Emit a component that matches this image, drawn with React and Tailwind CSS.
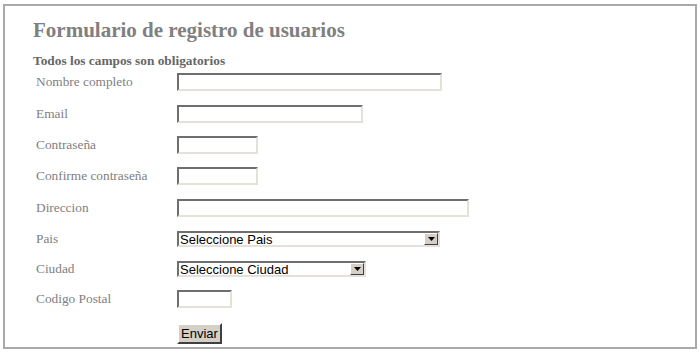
import React from 'react';

const serif = { fontFamily: '"Liberation Serif", "Times New Roman", serif' };
const sans = { fontFamily: '"Liberation Sans", Arial, sans-serif' };

const inset =
  'border-2 border-t-[#6e6e6e] border-l-[#6e6e6e] border-b-[#e4e1da] border-r-[#e4e1da] bg-white';

function Row({ label, children, className = '' }) {
  return (
    <div className={`flex items-center ${className}`}>
      <label className="w-[144px] pl-[3px] text-[13.33px] text-[#808080] leading-none" style={serif}>
        {label}
      </label>
      {children}
    </div>
  );
}

function TextInput({ width, type = 'text' }) {
  return <input type={type} className={`${inset} h-[18px] outline-none ${width}`} />;
}

function FakeSelect({ width, placeholder }) {
  return (
    <div className={`${inset} h-[16px] flex items-stretch ${width}`}>
      <select
        className="appearance-none flex-1 min-w-0 bg-white text-[13px] text-black leading-none pl-[1px] outline-none"
        style={sans}
        defaultValue=""
      >
        <option value="">{placeholder}</option>
      </select>
      <div className="w-[14px] bg-[#d4d0c8] border border-t-white border-l-white border-b-[#404040] border-r-[#404040] flex items-center justify-center">
        <svg width="7" height="4" viewBox="0 0 7 4">
          <path d="M0 0h7L3.5 4z" fill="#000" />
        </svg>
      </div>
    </div>
  );
}

export default function App() {
  return (
    <div className="bg-white w-[700px] h-[353px] pt-[4px] pl-[3px]">
      <div className="w-[694px] h-[345px] border-2 border-[#a9a9a9] pl-[28px]">
        <h1 className="mt-[12px] text-[21px] leading-[24px] font-bold text-[#808080]" style={serif}>
          Formulario de registro de usuarios
        </h1>
        <p className="mt-[11px] text-[13.33px] leading-[16px] font-bold text-[#666666]" style={serif}>
          Todos los campos son obligatorios
        </p>
        <form className="mt-[4px]" onSubmit={(e) => e.preventDefault()}>
          <Row label="Nombre completo">
            <TextInput width="w-[265px]" />
          </Row>
          <Row label="Email" className="mt-[14px]">
            <TextInput width="w-[186px]" type="email" />
          </Row>
          <Row label="Contraseña" className="mt-[13px]">
            <TextInput width="w-[81px]" type="password" />
          </Row>
          <Row label="Confirme contraseña" className="mt-[13px]">
            <TextInput width="w-[81px]" type="password" />
          </Row>
          <Row label="Direccion" className="mt-[14px]">
            <TextInput width="w-[292px]" />
          </Row>
          <Row label="Pais" className="mt-[14px]">
            <FakeSelect width="w-[263px]" placeholder="Seleccione Pais" />
          </Row>
          <Row label="Ciudad" className="mt-[14px]">
            <FakeSelect width="w-[189px]" placeholder="Seleccione Ciudad" />
          </Row>
          <Row label="Codigo Postal" className="mt-[13px]">
            <TextInput width="w-[55px]" />
          </Row>
          <div className="flex mt-[15px]">
            <div className="w-[144px]" />
            <button
              type="submit"
              className="h-[21px] w-[45px] bg-[#d4d0c8] border-2 border-t-white border-l-white border-b-[#404040] border-r-[#404040] text-[13px] text-black leading-none"
              style={sans}
            >
              Enviar
            </button>
          </div>
        </form>
      </div>
    </div>
  );
}
